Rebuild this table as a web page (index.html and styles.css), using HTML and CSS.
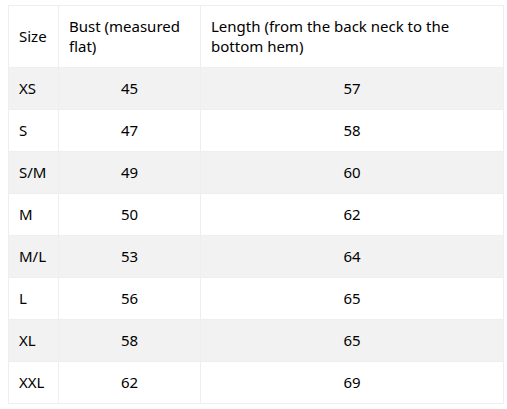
FILE: index.html
```html
<!DOCTYPE html>
<html>
<head>
<meta charset="utf-8">
<link rel="stylesheet" href="styles.css">
</head>
<body>
<div class="wrap">
<table class="size-table">
  <colgroup>
    <col class="c1"><col class="c2"><col class="c3">
  </colgroup>
  <thead>
    <tr><th>Size</th><th>Bust (measured flat)</th><th>Length (from the back neck to the bottom hem)</th></tr>
  </thead>
  <tbody>
    <tr class="alt"><td>XS</td><td class="num">45</td><td class="num">57</td></tr>
    <tr><td>S</td><td class="num">47</td><td class="num">58</td></tr>
    <tr class="alt"><td>S/M</td><td class="num">49</td><td class="num">60</td></tr>
    <tr><td>M</td><td class="num">50</td><td class="num">62</td></tr>
    <tr class="alt"><td>M/L</td><td class="num">53</td><td class="num">64</td></tr>
    <tr><td>L</td><td class="num">56</td><td class="num">65</td></tr>
    <tr class="alt"><td>XL</td><td class="num">58</td><td class="num">65</td></tr>
    <tr><td>XXL</td><td class="num">62</td><td class="num">69</td></tr>
  </tbody>
</table>
</div>
</body>
</html>
```
FILE: styles.css
```css
html, body {
  margin: 0;
  padding: 0;
  background: #fff;
}
.wrap {
  padding: 5px 4px 0 8px;
}
.size-table {
  border-collapse: collapse;
  table-layout: fixed;
  width: 495px;
  font-family: "Noto Sans", "Open Sans", sans-serif;
  font-size: 15px;
  line-height: 20px;
  color: #000;
}
.c1 { width: 50px; }
.c2 { width: 142px; }
.c3 { width: 303px; }
.size-table th,
.size-table td {
  border: 1px solid #eeeeee;
  padding: 9px 10px 11px;
  text-align: left;
  font-weight: normal;
  vertical-align: middle;
}
.size-table th {
  height: 41px;
}
.size-table td {
  height: 21px;
}
.size-table td.num {
  text-align: center;
}
.size-table tr.alt td {
  background: #f2f2f2;
}
```
